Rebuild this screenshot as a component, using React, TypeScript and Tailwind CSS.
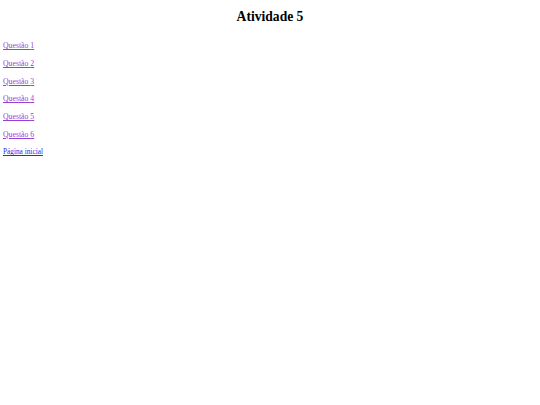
export default function App() {
  const questoes = [1, 2, 3, 4, 5, 6];

  return (
    <div className="min-h-screen bg-white px-[3px] py-px font-['Liberation_Serif',serif] text-black">
      <h1 className="mt-[8px] mb-[16.5px] text-center text-[13.6px] font-bold leading-[1.15]">Atividade 5</h1>
      {questoes.map((n) => (
        <p key={n} className="my-[8.7px] text-[7.75px] leading-[9px]">
          <a href="#" className="text-[#9a3fd6] underline">
            Questão {n}
          </a>
        </p>
      ))}
      <p className="my-[8.7px] text-[7.3px] leading-[9px]">
        <a href="#" className="text-[#2a2ae8] underline">
          Página inicial
        </a>
      </p>
    </div>
  );
}
